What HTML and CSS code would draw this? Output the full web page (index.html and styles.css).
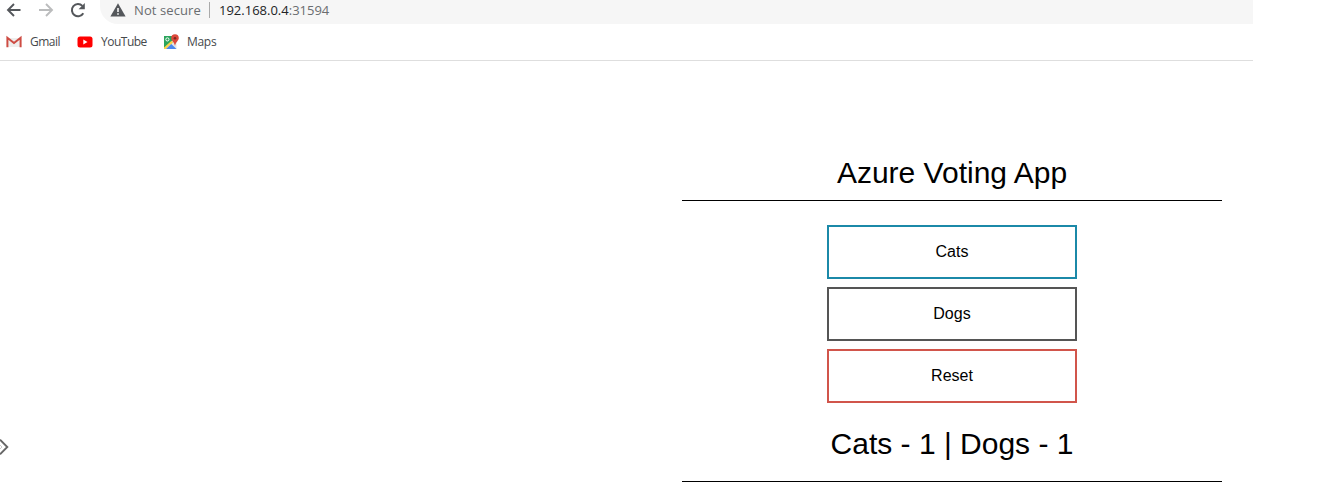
FILE: index.html
```html
<!DOCTYPE html>
<html lang="en">
<head>
<meta charset="utf-8">
<title>Azure Voting App</title>
<link rel="stylesheet" href="styles.css">
</head>
<body>
<header class="browser">
  <div class="toolbar">
    <nav class="nav">
      <svg class="icon" viewBox="0 0 16 16"><path d="M14.500 8H2.500M8 2L2 8l6 6" fill="none" stroke="#54575b" stroke-width="1.900"/></svg>
      <svg class="icon" viewBox="0 0 16 16"><path d="M1 8h12.500M8 2l6 6-6 6" fill="none" stroke="#bbbcbd" stroke-width="1.900"/></svg>
      <svg class="icon" viewBox="0 0 16 16"><path d="M13.300 11.200A6.100 6.100 0 1 1 12.400 3.900" fill="none" stroke="#54575b" stroke-width="2"/><path d="M14.800 1v6.200H8.600z" fill="#54575b"/></svg>
    </nav>
    <div class="address">
      <svg class="warning" viewBox="0 0 16 14"><path d="M8 .3L15.600 13.500H.4z" fill="#54575b"/><path d="M7.200 5h1.600v4H7.200zM7.200 10.200h1.600v1.600H7.200z" fill="#f6f6f6"/></svg>
      <span class="status">Not secure</span>
      <span class="divider"></span>
      <span class="url">192.168.0.4<span class="port">:31594</span></span>
    </div>
  </div>
  <div class="bookmarks">
    <span class="bookmark gmail"><svg class="icon" viewBox="0 0 16 16"><path d="M2 4h12v9H2z" fill="#eeeeed"/><path d="M1.400 13.200V3.800L8 9l6.600-5.200v9.400" fill="none" stroke="#ce4c43" stroke-width="2"/></svg><span class="label">Gmail</span></span>
    <span class="bookmark youtube"><svg class="icon" viewBox="0 0 16 16"><rect x=".5" y="2.500" width="15" height="11" rx="2.500" fill="#f00"/><path d="M6.300 5.600v4.800L10.500 8z" fill="#fff"/></svg><span class="label">YouTube</span></span>
    <span class="bookmark maps"><svg class="icon" viewBox="0 0 16 16"><path d="M1 2h12.500v13H1z" fill="#e4e6e5"/><path d="M1 2h10.500L9 7.500 1 15z" fill="#2ba45c"/><path d="M1 13.500l7.500-6.700 1.600 1.600L3 15H1z" fill="#fbd34a"/><path d="M3 15l5.300-5 5.200 5z" fill="#4a87ee"/><circle cx="4.400" cy="5.400" r="1.600" fill="none" stroke="#fff"/><path d="M12 .2a3.800 3.800 0 0 0-3.800 3.800c0 2.700 3 3.900 3.800 7.700 .8-3.800 3.800-5 3.800-7.700A3.800 3.800 0 0 0 12 .2" fill="#dc493b"/><circle cx="12" cy="4.200" r="1.300" fill="#7d2920"/></svg><span class="label">Maps</span></span>
  </div>
</header>
<main class="page">
  <svg class="handle" viewBox="0 0 9 18"><path d="M0 1.700L7.300 9 0 16.300" fill="none" stroke="#666" stroke-width="1.900"/><path d="M0 7l2 2-2 2" fill="none" stroke="#ccc"/></svg>
  <section class="voting">
    <h1 class="title">Azure Voting App</h1>
    <form class="choices">
      <button class="choice cats" type="button">Cats</button>
      <button class="choice dogs" type="button">Dogs</button>
      <button class="choice reset" type="button">Reset</button>
    </form>
    <div class="results">Cats - 1 | Dogs - 1</div>
  </section>
</main>
</body>
</html>
```
FILE: styles.css
```css
* { box-sizing: border-box; }
body { margin: 0; height: 490px; overflow: hidden; background: #fff; font-family: "Liberation Sans", Arial, sans-serif; color: #000; }
.browser { width: 1253px; height: 61px; border-bottom: 1px solid #dedede; font-family: "Open Sans", "Noto Sans", sans-serif; }
.toolbar { display: flex; height: 24px; }
.nav { display: flex; gap: 16px; width: 100px; height: 20px; padding-left: 6px; align-items: center; }
.icon { display: block; width: 16px; height: 16px; flex: none; }
.address { flex: 1; display: flex; height: 24px; padding: 0 0 4px 10px; align-items: center; background: #f6f6f6; border-radius: 0 0 0 18px; font-size: 13px; white-space: nowrap; }
.warning { width: 16px; height: 14px; margin-right: 8px; }
.status { width: 67px; color: #6a6d70; letter-spacing: 0.1px; }
.divider { width: 1px; height: 16px; margin: 0 9px 0 8px; background: #aaa; }
.url { color: #222426; }
.port { color: #6a6d70; }
.bookmarks { display: flex; height: 36px; align-items: center; font-size: 12px; color: #46494c; }
.bookmark { display: flex; align-items: center; gap: 8px; white-space: nowrap; }
.label { padding-bottom: 2px; letter-spacing: -0.5px; }
.gmail { width: 71px; margin-left: 6px; }
.youtube { width: 86px; }
.maps .label { letter-spacing: -0.3px; }
.page { display: flex; height: 429px; }
.handle { width: 9px; height: 18px; margin-top: 377px; flex: none; }
.voting { width: 540px; margin-left: 673px; padding-top: 84px; text-align: center; }
.title { margin: 0; height: 56px; border-bottom: 1px solid #000; font-size: 30px; line-height: 56px; font-weight: 400; }
.choices { display: flex; flex-direction: column; align-items: center; gap: 8px; padding-top: 24px; }
.choice { width: 250px; height: 54px; padding: 0; background: #fff; border: 2px solid; font: 16px "Liberation Sans", Arial, sans-serif; color: #000; }
.cats { border-color: #1b89a8; }
.dogs { border-color: #555; }
.reset { border-color: #d1554b; }
.results { height: 79px; border-bottom: 1px solid #000; font-size: 30px; line-height: 81px; }
```
